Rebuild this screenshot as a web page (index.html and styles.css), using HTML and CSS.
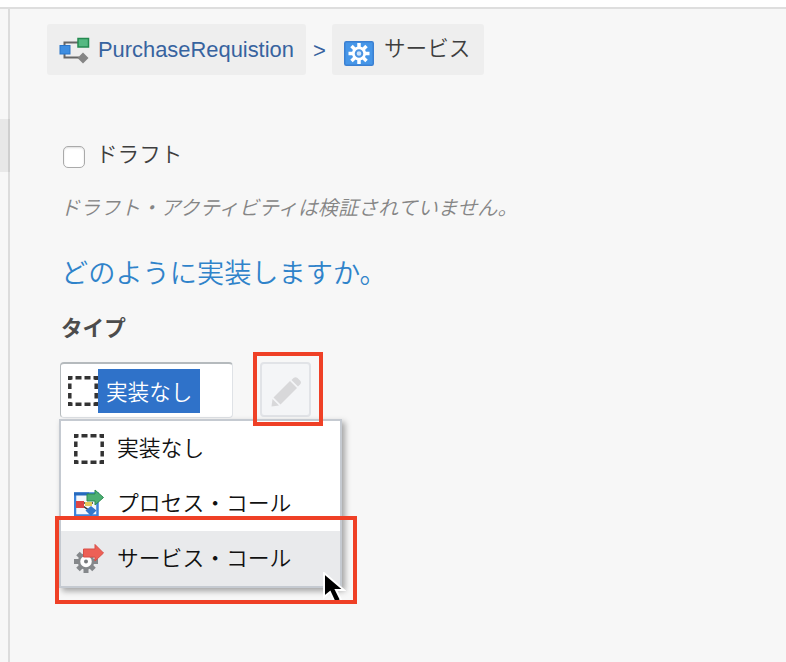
FILE: index.html
```html
<!DOCTYPE html>
<html lang="ja">
<head>
<meta charset="utf-8">
<title>サービス</title>
<link rel="stylesheet" href="styles.css">
</head>
<body>
<div class="topbar"></div>
<div class="workspace">
  <aside class="rail"><div class="rail-tab"></div></aside>
  <main class="panel">
    <nav class="breadcrumb">
      <a class="crumb crumb-process">
        <svg class="process-icon" width="32" height="28" viewBox="0 0 32 28"><path d="M5.500 12V6.500H20M5.500 17v4.500H20" fill="none" stroke="#666" stroke-width="2"/><rect x="1" y="9.500" width="10" height="8.500" fill="#3d8de0" stroke="#2874c8"/><rect x="19" y="2.500" width="10.500" height="8.500" fill="#55b982" stroke="#248a50" stroke-width="1.500"/><path d="M24 16.500l5.500 5.500-5.500 5.500-5.500-5.500z" fill="#858585"/></svg>
        <span class="crumb-name">PurchaseRequistion</span>
      </a>
      <span class="separator">&gt;</span>
      <span class="crumb crumb-service">
        <svg class="service-icon" width="30" height="25" viewBox="0 0 30 25"><rect x=".75" y=".75" width="28.500" height="23.500" rx="1.500" fill="#4696e8" stroke="#3b80d2" stroke-width="1.500"/><g stroke="#fff" stroke-width="3.500"><path d="M15 2v21M4.500 12.500h21M7.500 5l15 15M22.500 5l-15 15"/></g><circle cx="15" cy="12.500" r="7" fill="#fff"/><circle cx="15" cy="12.500" r="3.300" fill="#cfe3f9" stroke="#4c94e2" stroke-width="2"/></svg>
        <span>サービス</span>
      </span>
    </nav>
    <label class="draft"><span class="checkbox"></span><span>ドラフト</span></label>
    <p class="hint">ドラフト・アクティビティは検証されていません。</p>
    <h2 class="question">どのように実装しますか。</h2>
    <div class="label">タイプ</div>
    <div class="controls">
      <div class="select">
        <svg class="none-icon" width="30" height="30" viewBox="0 0 30 30"><use href="#dashed"/></svg>
        <span class="selected">実装なし</span>
      </div>
      <div class="edit">
        <svg width="30" height="30" viewBox="0 0 30 30"><g fill="#d8d8da"><path d="M.5 29.500l1-7.500 6.500 6.500z"/><path d="M2.500 20.500L19 4l7 7L9.500 27.500z"/><path d="M20.500 3l2-2q2-1.500 4 0l2.500 2.500q2 2 0 4l-2 2z"/></g></svg>
        <span class="mark mark-edit"></span>
      </div>
      <div class="menu">
        <div class="option">
          <svg width="30" height="30" viewBox="0 0 30 30"><g id="dashed" fill="none" stroke="#333" stroke-width="3.500"><path d="M0 1.800h4.500m3 0h6m3 0h6m3 0H30M0 28.200h4.500m3 0h6m3 0h6m3 0H30"/><path d="M1.800 0v4m0 3.500v5.500m0 4v5.500m0 3.500v4M28.200 0v4m0 3.500v5.500m0 4v5.500m0 3.500v4"/></g></svg>
          <span>実装なし</span>
        </div>
        <div class="option">
          <svg width="30" height="30" viewBox="0 0 30 30"><rect x="1" y="4.500" width="22.500" height="22" fill="#f4f8fc" stroke="#3c82da" stroke-width="2.500"/><path d="M0 5h15" stroke="#2669bd" stroke-width="3"/><path d="M10 14h9M9 17l7 5" stroke="#333" stroke-width="1.500"/><rect x="2" y="12" width="8" height="7" fill="#dd4544"/><path d="M11 13h7v4h-7z" fill="#e3ca5a"/><path d="M17 17l5.500 4.500L17 27l-5.500-5.500z" fill="#3478cb"/><path d="M13 5h8V1l8.500 7.500L21 16v-4h-8z" fill="#4caf73" stroke="#2b8b51"/></svg>
          <span>プロセス・コール</span>
        </div>
        <div class="option active">
          <svg width="30" height="30" viewBox="0 0 30 30"><g stroke="#85888b" stroke-width="5"><path d="M12 6v23M0 17.500h24M4 9.500l16 16M20 9.500l-16 16"/></g><circle cx="12" cy="17.500" r="7" fill="#fff" stroke="#85888b" stroke-width="2.500"/><circle cx="12" cy="17.500" r="2" fill="#777a7d"/><path d="M9.500 5H21V.5L29.500 9 21 17v-4H9.500z" fill="#ed6056" stroke="#d94e46"/></svg>
          <span>サービス・コール</span>
        </div>
        <svg class="cursor" width="24" height="34" viewBox="0 0 24 34"><path d="M2 1v24l6-5 5 11 6-3-5-10h8z" fill="#000" stroke="#fff" stroke-width="2"/></svg>
        <span class="mark mark-service"></span>
      </div>
    </div>
  </main>
</div>
</body>
</html>
```
FILE: styles.css
```css
* { box-sizing: border-box; }
body {
  margin: 0;
  height: 662px;
  overflow: hidden;
  display: flex;
  flex-direction: column;
  background: #f7f7f7;
  color: #3e3e3e;
  font: 350 21.6px/32px "Noto Sans CJK JP", sans-serif;
}
svg { display: block; flex: none; }
.topbar { height: 9px; flex: none; background: #fff; border-bottom: 2px solid #dedede; }
.workspace { display: flex; flex: 1; }
.rail { width: 10px; border-right: 2px solid #dcdcdc; padding-top: 110px; }
.rail-tab { width: 10px; height: 53px; background: rgba(0, 0, 0, .06); }
.panel { flex: 1; padding: 15px 0 0 37px; }
.breadcrumb { display: flex; height: 51px; }
.crumb { display: flex; height: 51px; background: #eee; border-radius: 3px; }
.crumb-process { width: 259px; padding: 9px 0 0 12px; color: #37639f; }
.process-icon { margin-top: 3px; }
.crumb-name { margin-left: 7px; font: 21.9px/33px "Liberation Sans", sans-serif; }
.separator { width: 26px; padding: 11px 0 0 7px; color: #37639f; font: 22px/32px "Liberation Sans", sans-serif; }
.crumb-service { width: 152px; padding: 7px 0 0 12px; gap: 10px; }
.service-icon { margin-top: 10px; }
.draft { display: flex; margin: 62px 0 0 16px; gap: 11px; }
.checkbox { width: 22px; height: 22px; margin-top: 9px; background: #fff; border: 1px solid #aaa; border-radius: 5px; box-shadow: inset 0 1px 2px #ddd; }
.hint { margin: 23px 0 0 13px; font-size: 20.1px; line-height: 30px; font-style: italic; color: #858585; }
.question { margin: 29px 0 0 14px; font-size: 27.2px; line-height: 40px; font-weight: 350; color: #2f83ca; }
.label { margin: 20px 0 0 14px; font-weight: 700; color: #4c4c4c; }
.controls { position: relative; display: flex; gap: 27px; margin: 19px 0 0 13px; }
.select { display: flex; width: 173px; height: 56px; padding: 5px 0 0 7px; background: #fff; border: 1px solid #dfe2e6; border-top: 2px solid #b5babd; border-left-color: #b5babd; border-radius: 4px; }
.none-icon { margin-top: 7px; }
.selected { width: 102px; height: 44px; padding-left: 8px; background: #2f72c9; color: #fff; line-height: 43px; }
.edit { position: relative; width: 51px; height: 55px; padding: 13px 0 0 9px; background: #f4f5f7; border: 2px solid #e1e3e7; border-radius: 4px; }
.mark { position: absolute; border: 4px solid #ef4026; }
.mark-edit { left: -9px; top: -12px; width: 70px; height: 74px; z-index: 2; }
.menu { position: absolute; left: -1px; top: 57px; width: 283px; height: 169px; background: #fff; color: #111; border: 2px solid #c5cad1; box-shadow: 3px 3px 6px rgba(0, 0, 0, .35); }
.option { display: flex; align-items: center; height: 55px; padding: 0 0 0 13px; gap: 13px; }
.option span { font-size: 21.8px; padding-bottom: 3px; }
.cursor { position: absolute; left: 261px; top: 151px; }
.option.active { background: #e9eaec; }
.mark-service { left: -6px; top: 95px; width: 302px; height: 88px; }
```
